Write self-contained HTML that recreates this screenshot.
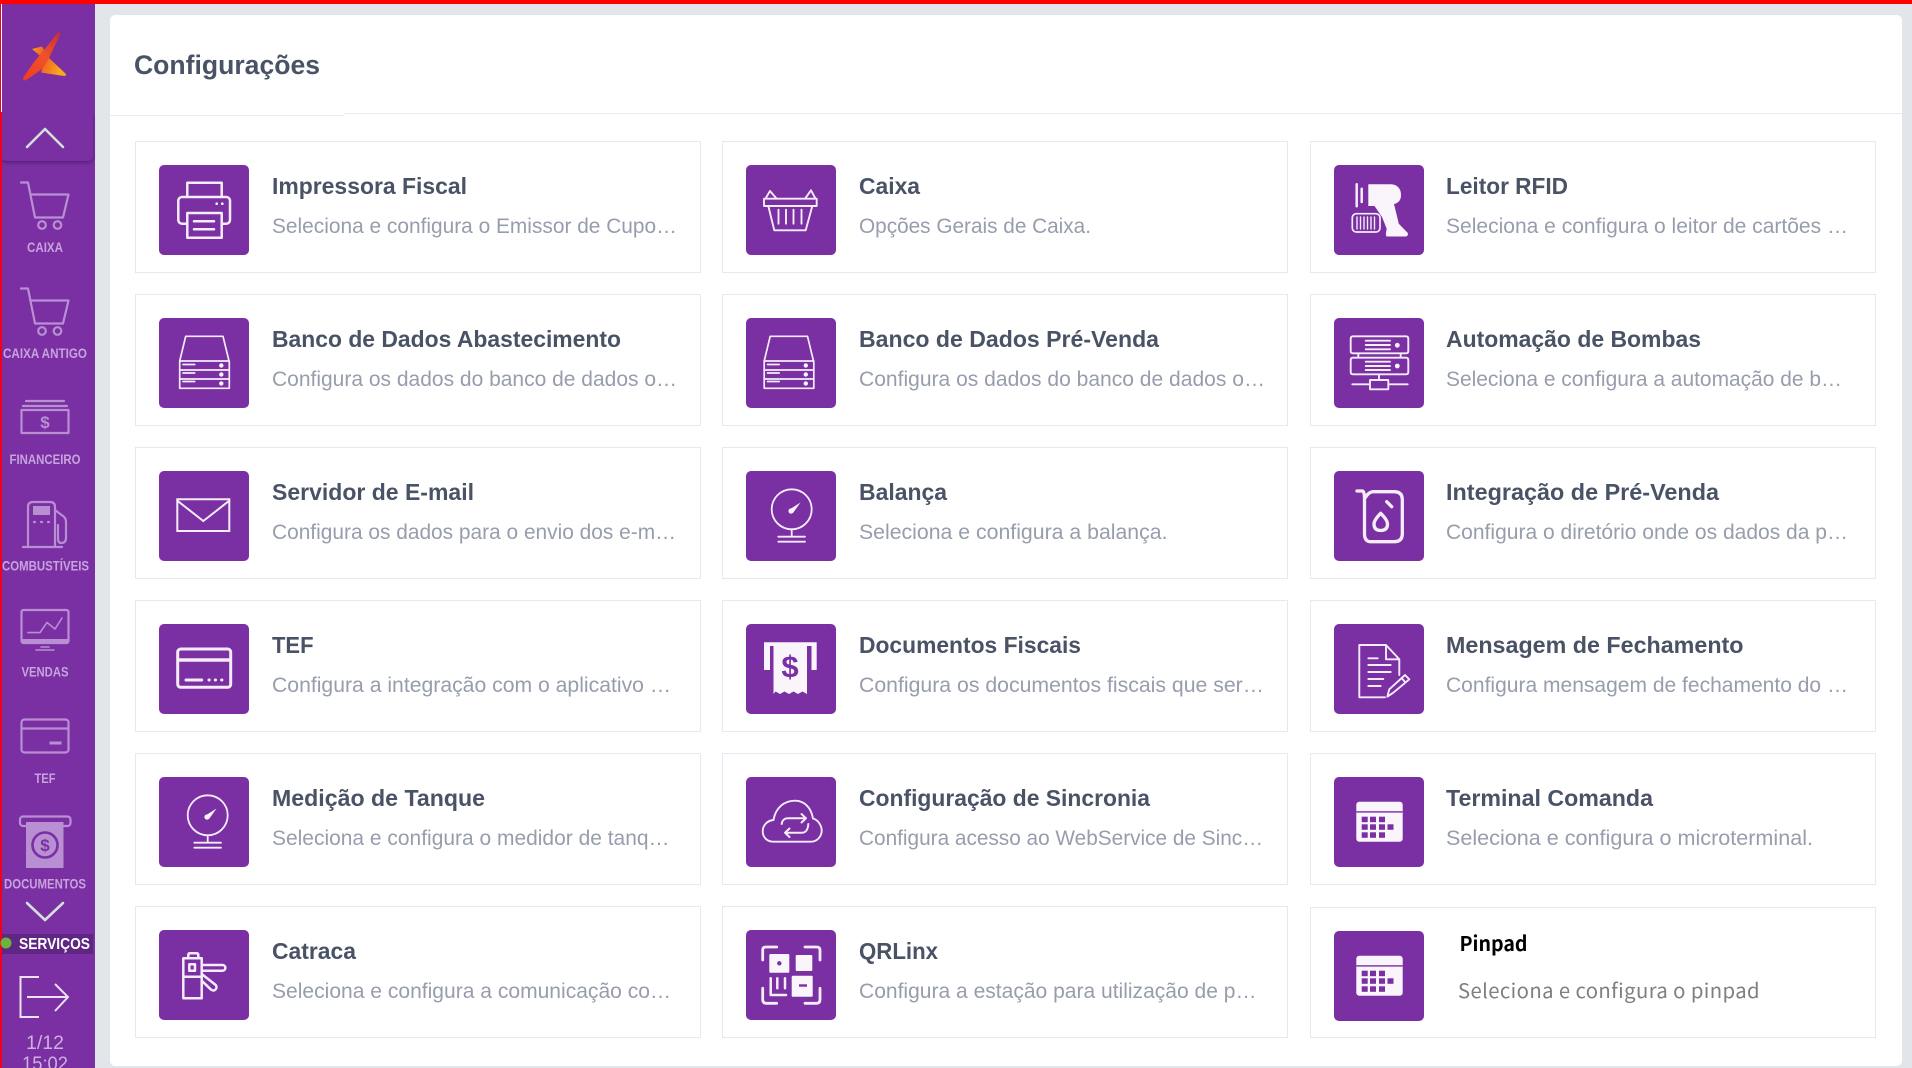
<!DOCTYPE html>
<html lang="pt-BR">
<head>
<meta charset="utf-8">
<title>Configurações</title>
<style>
html,body{margin:0;padding:0;width:1912px;height:1068px;overflow:hidden;background:#e2e6ea;}
*{box-sizing:border-box;}
.abs{position:absolute;}
#top{position:absolute;left:0;top:0;width:1912px;height:4px;background:#ff0000;z-index:6;}
#side{position:absolute;left:0;top:0;width:95px;height:1068px;background:#7a2fa3;}
#redl{position:absolute;left:0;top:0;width:1.5px;height:1068px;background:#f0001a;z-index:3;}
#whl{position:absolute;left:1px;top:4px;width:1px;height:108px;background:#fff;z-index:4;}
#upbox{position:absolute;left:1px;top:115px;width:92px;height:46px;background:#7a2fa3;border-radius:0 0 5px 5px;box-shadow:0 2px 3px rgba(50,10,80,.45);}
#srv{position:absolute;left:1px;top:934px;width:92px;height:20px;background:#5f2683;}
#panel{position:absolute;left:110px;top:15px;width:1792px;height:1051px;background:#fff;border-radius:5px;}
#h1{position:absolute;left:110px;top:114.5px;width:234px;height:1px;background:#e9ebf1;}
#h2{position:absolute;left:344px;top:113px;width:1558px;height:1px;background:#e9ebf1;}
.card{position:absolute;width:566px;height:132px;background:#fff;border:1px solid #e7e8f1;}
.ic{position:absolute;left:23px;top:23px;width:90px;height:90px;background:#7a2fa3;border-radius:5px;display:block;}
.s{fill:none;stroke:#f4ecf8;stroke-width:2.5;stroke-linecap:round;stroke-linejoin:round;}
.f{fill:#f9f5fb;stroke:none;}
.p{fill:#7a2fa3;stroke:none;}
#txt{position:absolute;left:0;top:0;z-index:5;}
.t{font:700 23px "Liberation Sans",sans-serif;fill:#4a5366;}
.d{font:400 21px "Liberation Sans",sans-serif;fill:#979dac;}
.l{font:700 13.5px "Liberation Sans",sans-serif;fill:#c7a3de;}
#ss{position:absolute;left:0;top:0;z-index:2;}
.si{fill:none;stroke:#b98fd3;stroke-width:2.2;stroke-linecap:round;stroke-linejoin:round;}
</style>
</head>
<body>
<svg width="0" height="0" style="position:absolute">
<defs>
<symbol id="db" viewBox="0 0 90 90">
<path class="s" style="stroke-width:1.7" d="M26.7 18.3H64L70 43H20.7ZM20.7 43H70.3V70.3H20.7ZM20.7 52H70.3M20.7 61H70.3"/>
<path class="s" style="stroke-width:1.7" d="M24 46.5H35.7M24 55H35.7M24 63.5H35.7"/>
<circle class="f" cx="62.3" cy="47.5" r="2.2"/><circle class="f" cx="62.3" cy="56.5" r="2.2"/><circle class="f" cx="62.3" cy="65.5" r="2.2"/>
</symbol>
<symbol id="scale" viewBox="0 0 90 90">
<circle class="s" style="stroke-width:1.8" cx="45.7" cy="38.3" r="20"/>
<path class="s" style="stroke-width:1.8" d="M45.7 58.3V65.7M32.3 65.7H59M32.3 70.7H59"/>
<circle class="f" cx="45" cy="40" r="2.6"/><path class="f" d="M43.5 38.5L54.5 31.5L47 42Z"/>
</symbol>
<symbol id="cal" viewBox="0 0 90 90">
<rect class="f" x="22.3" y="24.7" width="46.4" height="40" rx="3"/>
<rect class="p" x="22.3" y="34.2" width="46.4" height="1.4"/>
<g class="p">
<rect x="27.7" y="39.7" width="6" height="5.5"/><rect x="36" y="39.7" width="6" height="5.5"/><rect x="45" y="39.7" width="6" height="5.5"/>
<rect x="27.7" y="47.3" width="6" height="5.5"/><rect x="36" y="47.3" width="6" height="5.5"/><rect x="45" y="47.3" width="6" height="5.5"/><rect x="53.5" y="47.3" width="6" height="5.5"/>
<rect x="27.7" y="55.3" width="6" height="5.5"/><rect x="36" y="55.3" width="6" height="5.5"/><rect x="45" y="55.3" width="6" height="5.5"/>
</g>
</symbol>
<linearGradient id="lg1" x1="0" y1="1" x2="1" y2="0"><stop offset="0" stop-color="#ee3b24"/><stop offset=".55" stop-color="#f0512a"/><stop offset="1" stop-color="#c9302f"/></linearGradient>
<linearGradient id="lg2" x1="0" y1="0" x2="1" y2=".4"><stop offset="0" stop-color="#f8a51d"/><stop offset=".4" stop-color="#ef5a22"/><stop offset="1" stop-color="#f9a81c"/></linearGradient>
</defs>
</svg>

<div id="side"></div>
<div id="redl"></div>
<div id="whl"></div>
<div id="upbox"></div>
<div id="srv"></div>
<div id="top"></div>

<svg id="ss" width="95" height="1068" viewBox="0 0 95 1068" style="z-index:3">
<!-- logo -->
<path fill="url(#lg2)" d="M32 49L42 46.5L50 59L65.5 73.5Q67 76 64 76L41 72.5L45 60Z"/>
<path fill="url(#lg1)" d="M58 32.5Q60.5 32 60 35L48 60L43 68Q33 76 25 80.5Q22 80.5 23.5 77L34 62Q46 48 58 32.5Z"/>
<!-- up chevron -->
<path fill="none" stroke="#d3dfd9" stroke-width="2.6" stroke-linecap="round" stroke-linejoin="round" d="M27 147L45 129L63 147"/>
<!-- cart -->
<path class="si" d="M21 182.5H28L35 217.5H63L68.5 194.5H30.5"/><circle class="si" cx="42" cy="225" r="3.8"/><circle class="si" cx="57.500" cy="225" r="3.8"/>
<path class="si" d="M21 288.5H28L35 323.5H63L68.5 300.5H30.5"/><circle class="si" cx="42" cy="331" r="3.8"/><circle class="si" cx="57.500" cy="331" r="3.8"/>
<!-- financeiro -->
<path class="si" d="M26 401H64M23 406H67"/><rect class="si" x="21.5" y="410" width="47" height="23"/>
<text x="45" y="428" text-anchor="middle" style="font:700 17px 'Liberation Sans',sans-serif;fill:#b98fd3">$</text>
<!-- fuel -->
<path class="si" d="M28 546V507Q28 502 33 502H50Q55 502 55 507V546M23 547H62M55 510L63 516Q66 518 66 522V538Q66 543 61 543Q58 543 58 538V525"/>
<rect x="33" y="506" width="17" height="9" fill="#b98fd3"/>
<path class="si" d="M34 522H35M41 522H42M48 522H49"/>
<!-- vendas -->
<rect class="si" x="21.5" y="610" width="47" height="33" rx="2"/>
<rect x="21.5" y="639" width="47" height="4.5" fill="#b98fd3"/>
<path class="si" style="stroke-width:1.6" d="M28 632.6H40L47 622.5L55 629L62 618M36 650H54M41 647H49"/>
<!-- tef -->
<rect class="si" x="21.5" y="719.5" width="47" height="33" rx="3"/>
<path class="si" d="M21.5 728.5H68.5"/>
<path d="M49.5 743H61.5" fill="none" stroke="#b98fd3" stroke-width="3"/>
<!-- documentos -->
<rect class="si" x="20" y="816.5" width="50.5" height="9.5" rx="3"/>
<rect x="26" y="822" width="37.5" height="46" fill="#b98fd3"/>
<circle cx="45" cy="845" r="12.5" fill="none" stroke="#7a2fa3" stroke-width="2.6"/>
<text x="45" y="851" text-anchor="middle" style="font:700 17px 'Liberation Sans',sans-serif;fill:#7a2fa3">$</text>
<!-- down chevron -->
<path fill="none" stroke="#d3dfd9" stroke-width="2.6" stroke-linecap="round" stroke-linejoin="round" d="M27 903L45 920L63 903"/>
<!-- green dot -->
<circle cx="6" cy="943" r="5.5" fill="#6cb33f"/>
<!-- exit -->
<path fill="none" stroke="#ece2f3" stroke-width="2" d="M39 977H20.5V1017H39M27 997H68M55 984L68 997L55 1011"/>
</svg>

<div id="panel"></div>
<div id="h1"></div>
<div id="h2"></div>

<div class="card" style="left:135px;top:141px"><svg class="ic" viewBox="0 0 90 90">
<path class="s" d="M28.3 32V17.7H62.7V32M28.3 58.7H23A3.7 3.7 0 0 1 19.3 55V35.7A3.7 3.7 0 0 1 23 32H67.3A3.7 3.7 0 0 1 71 35.7V55A3.7 3.7 0 0 1 67.3 58.7H62.7M28.3 48H62.7V72.7H28.3ZM35 56.3H55M35 64.3H55"/>
<circle class="f" cx="57.7" cy="38.7" r="1.3"/><circle class="f" cx="63.3" cy="38.7" r="1.3"/>
</svg></div>
<div class="card" style="left:722px;top:141px"><svg class="ic" viewBox="0 0 90 90">
<path class="s" style="stroke-width:1.9" d="M18 33.7H70.7V41H18ZM22.3 41L28.3 65.3H59.7L66.3 41M20 32.7L24 26L30.7 33.7M59 33.7L65 25.3L69 32.7M32.5 44.7V58.7M40 44.7V58.7M47.5 44.7V58.7M55.5 44.7V58.7"/>
</svg></div>
<div class="card" style="left:1310px;top:141px"><svg class="ic" viewBox="0 0 90 90">
<path class="f" d="M34.3 19.3H57Q67 20 67 30.3Q67 37.5 60 39L64.8 58.7L73.8 68Q74.5 71.5 71 71.5H53Q51 71.5 52.7 63.7L48 52L40.5 41H34.3Z"/>
<path class="s" d="M22.7 19.3V41.3M27.7 23.7V37"/>
<rect class="s" style="stroke-width:1.7" x="18.3" y="48.7" width="27.7" height="18.3" rx="4"/>
<path class="s" style="stroke-width:1.4" d="M23 52V64M26.5 52V64M30 52V64M33.5 52V64M37 52V64M40.5 52V64"/>
</svg></div>

<div class="card" style="left:135px;top:294px"><svg class="ic" viewBox="0 0 90 90"><use href="#db"/></svg></div>
<div class="card" style="left:722px;top:294px"><svg class="ic" viewBox="0 0 90 90"><use href="#db" x="-2.5"/></svg></div>
<div class="card" style="left:1310px;top:294px"><svg class="ic" viewBox="0 0 90 90">
<path class="s" style="stroke-width:1.9" d="M19 18.3H72Q74.3 18.3 74.3 20.6V33Q74.3 35.3 72 35.3H19Q16.7 35.3 16.7 33V20.6Q16.7 18.3 19 18.3ZM19 39.7H72Q74.3 39.7 74.3 42V54Q74.3 56.3 72 56.3H19Q16.7 56.3 16.7 54V42Q16.7 39.7 19 39.7ZM31.7 22.7H56M31.7 27H56M31.7 31.3H56M31.7 43.7H56M31.7 48H56M31.7 52H56M24.3 35.3V39.7M66.7 35.3V39.7M45 56.3V62M36 62H54.3V71.3H36ZM18.3 66.3H36M54.3 66.3H73.7"/>
<circle class="f" cx="63.3" cy="27.3" r="2.4"/><circle class="f" cx="63.3" cy="48" r="2.4"/>
</svg></div>

<div class="card" style="left:135px;top:447px"><svg class="ic" viewBox="0 0 90 90">
<path class="s" style="stroke-width:2;stroke-linecap:square;stroke-linejoin:miter" d="M18.3 28.3H70.3V60H18.3ZM18.3 29.7L44.3 50L70.3 29.7"/>
</svg></div>
<div class="card" style="left:722px;top:447px"><svg class="ic" viewBox="0 0 90 90"><use href="#scale"/></svg></div>
<div class="card" style="left:1310px;top:447px"><svg class="ic" viewBox="0 0 90 90">
<path class="s" style="stroke-width:3.3" d="M23 20H28.5Q30.5 20.5 30.5 27.5V62.7Q30.5 70.7 37 70.7H60Q68.3 70.7 68.3 62.7V28.7Q68.3 20.7 60 20.7H39Q35 20.7 31 27M52.7 30.7L57.7 35.7M46.7 42.3Q53.5 49 53.5 53Q53.5 59.5 46.7 59.5Q40 59.5 40 53Q40 49 46.7 42.3Z"/>
</svg></div>

<div class="card" style="left:135px;top:600px"><svg class="ic" viewBox="0 0 90 90">
<rect class="s" style="stroke-width:3" x="18.7" y="25" width="53" height="38.3" rx="3"/>
<path class="s" style="stroke-width:3.4;stroke-linecap:butt" d="M18.7 36H71.7"/>
<path class="s" style="stroke-width:3" d="M27 56H42.7M50 56H50.2M56.3 56H56.5M62.7 56H62.9"/>
</svg></div>
<div class="card" style="left:722px;top:600px"><svg class="ic" viewBox="0 0 90 90">
<path class="f" d="M18 18.3H70.7V46H65.5V22H61V70L56.5 67.5L52 70L47.5 67.5L43 70L38.5 67.5L34 70L29.5 67.5L27.5 70V22H24V46H18Z"/>
<text x="44" y="53" text-anchor="middle" style="font:700 31px 'Liberation Sans',sans-serif;fill:#7a2fa3">$</text>
</svg></div>
<div class="card" style="left:1310px;top:600px"><svg class="ic" viewBox="0 0 90 90">
<path class="s" style="stroke-width:1.9" d="M51 73.3H25.3V21H52L65.3 35.3V51M52 21V35.3H65.3M34.3 34.3H43.7M34.3 41H56.7M34.3 48H56.7M34.3 55H49.3M34.3 62H46.7"/>
<path class="s" style="stroke-width:1.9" d="M71 51L75.3 55.3L59.3 68.7L53.3 72.7L55.3 65.3ZM67.5 54L71.5 58.5"/>
</svg></div>

<div class="card" style="left:135px;top:753px"><svg class="ic" viewBox="0 0 90 90"><use href="#scale" x="3"/></svg></div>
<div class="card" style="left:722px;top:753px"><svg class="ic" viewBox="0 0 90 90">
<path class="s" style="stroke-width:1.9" d="M27 64.7C20 64.7 16.7 59 16.7 54.5C16.7 48 21.5 43.5 27.5 43C29.5 31 38 23.7 49 23.7C58 23.7 65 30 67 41.5C72.5 43 75.7 49 75.7 53.5C75.7 59.5 71 64.7 65 64.7Z"/>
<path class="s" style="stroke-width:2" d="M35.7 47C36 44 38 41.3 42 41.3H60M55.5 37L60 41.3L55.5 45.5M62.3 47C62 52 60 55.7 56 55.7H39M43.5 51.5L39 55.7L43.5 60"/>
</svg></div>
<div class="card" style="left:1310px;top:753px"><svg class="ic" viewBox="0 0 90 90"><use href="#cal"/></svg></div>

<div class="card" style="left:135px;top:906px"><svg class="ic" viewBox="0 0 90 90">
<path class="s" d="M24.3 68.3V28.3H42.7V68.3ZM24.3 46.7H42.7M29.3 28.3V25Q29.3 23.3 31 23.3H37.5Q39.3 23.3 39.3 25V28.3M30.3 34.3H36V40.7H30.3ZM42.7 35H63.5A2.8 2.8 0 0 1 63.5 40.7H42.7M42.7 44L56.7 55A3 3 0 0 1 51.7 59.3L42.7 50.7"/>
</svg></div>
<div class="card" style="left:722px;top:906px"><svg class="ic" viewBox="0 0 90 90">
<path class="s" style="stroke-width:2.8" d="M16.7 30V20Q16.7 17 20 17H30.7M59 17H70.5Q74 17 74 20V30M16.7 58.3V69.5Q16.7 73.3 20.5 73.3H30.7M74 58.3V69.5Q74 73.3 70.5 73.3H59"/>
<rect class="f" x="23.3" y="24" width="20" height="18.7" rx="1"/><circle class="p" cx="33.3" cy="33.3" r="2.2"/>
<rect class="f" x="49.7" y="25" width="16.6" height="16" rx="1"/>
<rect class="f" x="45.7" y="45.7" width="21" height="21" rx="1"/><rect class="p" x="53" y="54.3" width="8" height="2.4"/>
<path class="s" d="M24.7 48.3V65H40M31.3 48.3V58.3M39 48.3V58.3"/>
</svg></div>
<div class="card" style="left:1310px;top:907px;height:131px"><svg class="ic" viewBox="0 0 90 90"><use href="#cal"/></svg></div>

<svg id="txt" width="1912" height="1068" viewBox="0 0 1912 1068">
<text x="134" y="74" textLength="186" lengthAdjust="spacingAndGlyphs" style="font:700 27px 'Liberation Sans',sans-serif;fill:#4a5366">Configurações</text>

<text class="t" x="272" y="194" textLength="195" lengthAdjust="spacingAndGlyphs">Impressora Fiscal</text>
<text class="d" x="272" y="233" textLength="405" lengthAdjust="spacingAndGlyphs">Seleciona e configura o Emissor de Cupo…</text>
<text class="t" x="859" y="194" textLength="61" lengthAdjust="spacingAndGlyphs">Caixa</text>
<text class="d" x="859" y="233" textLength="232" lengthAdjust="spacingAndGlyphs">Opções Gerais de Caixa.</text>
<text class="t" x="1446" y="194" textLength="122" lengthAdjust="spacingAndGlyphs">Leitor RFID</text>
<text class="d" x="1446" y="233" textLength="402" lengthAdjust="spacingAndGlyphs">Seleciona e configura o leitor de cartões …</text>

<text class="t" x="272" y="347" textLength="349" lengthAdjust="spacingAndGlyphs">Banco de Dados Abastecimento</text>
<text class="d" x="272" y="386" textLength="405" lengthAdjust="spacingAndGlyphs">Configura os dados do banco de dados o…</text>
<text class="t" x="859" y="347" textLength="300" lengthAdjust="spacingAndGlyphs">Banco de Dados Pré-Venda</text>
<text class="d" x="859" y="386" textLength="406" lengthAdjust="spacingAndGlyphs">Configura os dados do banco de dados o…</text>
<text class="t" x="1446" y="347" textLength="255" lengthAdjust="spacingAndGlyphs">Automação de Bombas</text>
<text class="d" x="1446" y="386" textLength="396" lengthAdjust="spacingAndGlyphs">Seleciona e configura a automação de b…</text>

<text class="t" x="272" y="500" textLength="202" lengthAdjust="spacingAndGlyphs">Servidor de E-mail</text>
<text class="d" x="272" y="539" textLength="404" lengthAdjust="spacingAndGlyphs">Configura os dados para o envio dos e-m…</text>
<text class="t" x="859" y="500" textLength="88" lengthAdjust="spacingAndGlyphs">Balança</text>
<text class="d" x="859" y="539" textLength="308.5" lengthAdjust="spacingAndGlyphs">Seleciona e configura a balança.</text>
<text class="t" x="1446" y="500" textLength="273" lengthAdjust="spacingAndGlyphs">Integração de Pré-Venda</text>
<text class="d" x="1446" y="539" textLength="402" lengthAdjust="spacingAndGlyphs">Configura o diretório onde os dados da p…</text>

<text class="t" x="272" y="653" textLength="41.5" lengthAdjust="spacingAndGlyphs">TEF</text>
<text class="d" x="272" y="692" textLength="399" lengthAdjust="spacingAndGlyphs">Configura a integração com o aplicativo …</text>
<text class="t" x="859" y="653" textLength="222" lengthAdjust="spacingAndGlyphs">Documentos Fiscais</text>
<text class="d" x="859" y="692" textLength="405" lengthAdjust="spacingAndGlyphs">Configura os documentos fiscais que ser…</text>
<text class="t" x="1446" y="653" textLength="297.5" lengthAdjust="spacingAndGlyphs">Mensagem de Fechamento</text>
<text class="d" x="1446" y="692" textLength="402" lengthAdjust="spacingAndGlyphs">Configura mensagem de fechamento do …</text>

<text class="t" x="272" y="806" textLength="213" lengthAdjust="spacingAndGlyphs">Medição de Tanque</text>
<text class="d" x="272" y="845" textLength="397.5" lengthAdjust="spacingAndGlyphs">Seleciona e configura o medidor de tanq…</text>
<text class="t" x="859" y="806" textLength="291" lengthAdjust="spacingAndGlyphs">Configuração de Sincronia</text>
<text class="d" x="859" y="845" textLength="404" lengthAdjust="spacingAndGlyphs">Configura acesso ao WebService de Sinc…</text>
<text class="t" x="1446" y="806" textLength="207" lengthAdjust="spacingAndGlyphs">Terminal Comanda</text>
<text class="d" x="1446" y="845" textLength="367" lengthAdjust="spacingAndGlyphs">Seleciona e configura o microterminal.</text>

<text class="t" x="272" y="959" textLength="84" lengthAdjust="spacingAndGlyphs">Catraca</text>
<text class="d" x="272" y="998" textLength="399" lengthAdjust="spacingAndGlyphs">Seleciona e configura a comunicação co…</text>
<text class="t" x="859" y="959" textLength="79" lengthAdjust="spacingAndGlyphs">QRLinx</text>
<text class="d" x="859" y="998" textLength="397.5" lengthAdjust="spacingAndGlyphs">Configura a estação para utilização de p…</text>
<text x="1459.500" y="951" textLength="68" lengthAdjust="spacingAndGlyphs" style="font:700 20.5px 'Noto Sans CJK JP','Liberation Sans',sans-serif;fill:#000">Pinpad</text>
<text x="1458" y="998" textLength="302" lengthAdjust="spacingAndGlyphs" style="font:400 20px 'Noto Sans CJK JP','Liberation Sans',sans-serif;letter-spacing:.4px;fill:#7f7f7f">Seleciona e configura o pinpad</text>

<text class="l" x="27" y="252" textLength="36" lengthAdjust="spacingAndGlyphs">CAIXA</text>
<text class="l" x="3" y="358" textLength="84" lengthAdjust="spacingAndGlyphs">CAIXA ANTIGO</text>
<text class="l" x="9.5" y="464" textLength="71" lengthAdjust="spacingAndGlyphs">FINANCEIRO</text>
<text class="l" x="2" y="570.500" textLength="87" lengthAdjust="spacingAndGlyphs">COMBUSTÍVEIS</text>
<text class="l" x="21.5" y="676.500" textLength="47" lengthAdjust="spacingAndGlyphs">VENDAS</text>
<text class="l" x="34.500" y="783" textLength="21" lengthAdjust="spacingAndGlyphs">TEF</text>
<text class="l" x="4" y="888.500" textLength="82" lengthAdjust="spacingAndGlyphs">DOCUMENTOS</text>
<text x="19" y="949" textLength="71" lengthAdjust="spacingAndGlyphs" style="font:700 15.5px 'Liberation Sans',sans-serif;fill:#fff">SERVIÇOS</text>
<text x="26" y="1049" textLength="38" lengthAdjust="spacingAndGlyphs" style="font:400 19.5px 'Liberation Sans',sans-serif;fill:#cdb0e2">1/12</text>
<text x="22" y="1070" textLength="46" lengthAdjust="spacingAndGlyphs" style="font:400 19.5px 'Liberation Sans',sans-serif;fill:#cdb0e2">15:02</text>
</svg>
</body>
</html>
